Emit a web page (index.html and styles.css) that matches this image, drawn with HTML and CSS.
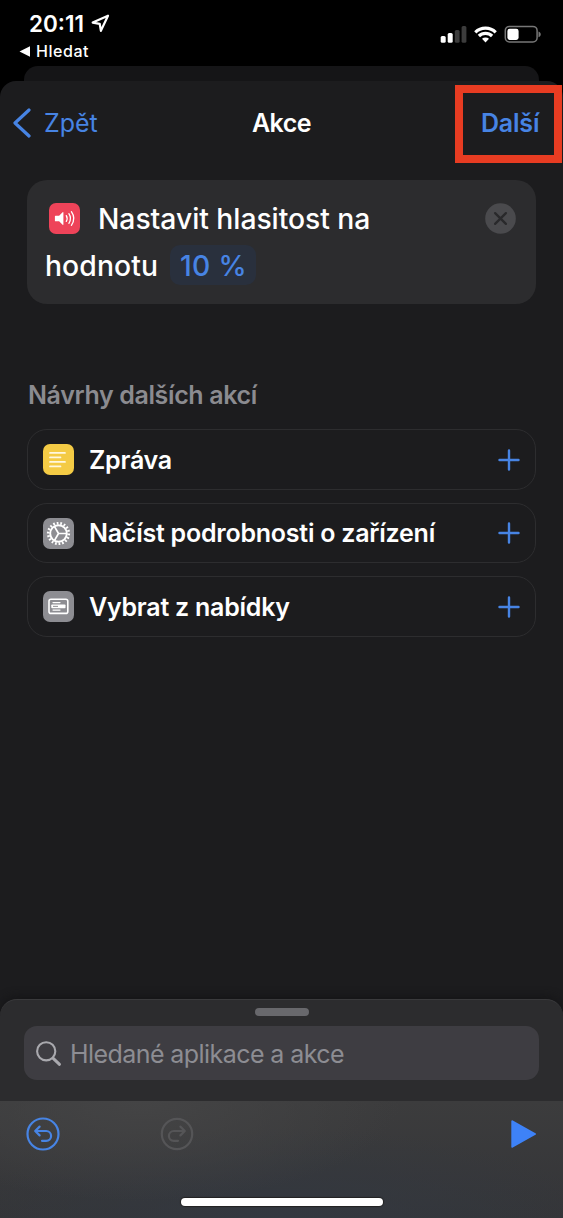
FILE: index.html
```html
<!DOCTYPE html>
<html lang="cs">
<head>
<meta charset="utf-8">
<title>Akce</title>
<link rel="stylesheet" href="styles.css">
</head>
<body>
<div class="phone">
  <header class="status">
    <div class="status-left">
      <div class="time"><span class="clock">20:11</span>
        <svg class="loc" width="19" height="19" viewBox="0 0 19 19"><path d="M17 1.700 1.700 8.600 8.700 9.800 9.900 16.800Z"/></svg>
      </div>
      <div class="return"><svg width="12" height="11" viewBox="0 0 12 11"><path d="M11 0.300V10.700L0.500 5.500Z" fill="#fff"/></svg><span class="return-text">Hledat</span></div>
    </div>
    <svg class="indicators" width="102" height="20" viewBox="0 0 102 20">
      <g fill="#fff"><rect x="0.700" y="12" width="5" height="6.800" rx="1.500"/><rect x="7.700" y="9" width="5" height="9.800" rx="1.500"/></g>
      <g fill="#3c3c3c"><rect x="14.800" y="6" width="4.800" height="12.800" rx="1.500"/><rect x="21.600" y="2" width="4.800" height="16.800" rx="1.500"/></g>
      <g fill="none" stroke="#fff" stroke-width="3.200"><path d="M35.300 8.300a14.600 14.600 0 0 1 20.400 0"/><path d="M38.900 12a9.400 9.400 0 0 1 13.200 0"/></g>
      <path d="M42 14.800a5.100 5.100 0 0 1 7 0L45.500 18.500Z" fill="#fff"/>
      <rect x="65.300" y="2.400" width="31.800" height="15.600" rx="4.200" fill="none" stroke="#777" stroke-width="1.500"/>
      <rect x="67.400" y="4.700" width="11.200" height="11.200" rx="2.300" fill="#fff"/>
      <path d="M98.500 7.500c3 1 3 4.800 0 5.800z" fill="#777"/>
    </svg>
  </header>
  <div class="back-sheet"></div>
  <section class="sheet">
    <nav class="nav">
      <div class="back"><svg width="20" height="30" viewBox="0 0 20 30"><path d="M17 2 3 15 17 28" fill="none" stroke="#4784e4" stroke-width="3.200" stroke-linecap="round" stroke-linejoin="round"/></svg><span class="back-text">Zpět</span></div>
      <span class="title">Akce</span>
      <div class="next"><span class="next-text">Další</span></div>
    </nav>
    <article class="action">
      <div class="action-line">
        <svg class="tile" width="31" height="31" viewBox="0 0 31 31"><rect width="31" height="31" rx="7" fill="#ee4359"/><path d="M6.500 12.700h3.600l3.500-3.400q.8-.6.8.4v11.600q0 1-.8.400l-3.500-3.400H6.500q-.6 0-.6-.6v-4.400q0-.6.600-.600z" fill="#fff"/><g fill="none" stroke="#fff" stroke-width="1.300" stroke-linecap="round"><path d="M17.300 12.600q1.700 2.900 0 5.800"/><path d="M19.900 10.700q3.200 4.800 0 9.600"/><path d="M22.400 8.700q4.800 6.800 0 13.600"/></g></svg>
        <span class="action-text">Nastavit hlasitost na</span>
        <svg class="close" width="31" height="31" viewBox="0 0 31 31"><circle cx="15.500" cy="15.500" r="15.300" fill="#4a4a4d"/><path d="M10.100 10.100 20.900 20.900M20.900 10.100 10.100 20.900" stroke="#29292b" stroke-width="2.300" stroke-linecap="round"/></svg>
      </div>
      <div class="action-line second"><span class="action-word">hodnotu</span><span class="value"><span class="value-text">10 %</span></span></div>
    </article>
    <h2 class="heading"><span class="heading-text">Návrhy dalších akcí</span></h2>
    <ul class="list">
      <li class="row">
        <svg class="tile" width="31" height="31" viewBox="0 0 31 31"><rect width="31" height="31" rx="7" fill="#f4cb45"/><path d="M7 8.900h15M7 13.400h10.500M7 17.900h15M7 22.400h10.500" stroke="#fff8df" stroke-width="1.700" stroke-linecap="round"/></svg>
        <span class="label l1">Zpráva</span>
        <svg class="plus" width="22" height="22" viewBox="0 0 22 22"><path d="M11 1.500v19M1.500 11h19"/></svg>
      </li>
      <li class="row">
        <svg class="tile" width="31" height="31" viewBox="0 0 31 31"><rect width="31" height="31" rx="7" fill="#8d8d92"/><g fill="none" stroke="#fff"><circle cx="15.500" cy="15.500" r="8.300" stroke-width="1.900"/><circle cx="15.500" cy="15.500" r="10.300" stroke-width="2.600" pathLength="54" stroke-dasharray="1.450 1.550"/><path d="M15.500 15.500h8M15.500 15.500 11.400 8.400M15.500 15.500 11.400 22.600" stroke-width="1.700"/></g></svg>
        <span class="label l2">Načíst podrobnosti o zařízení</span>
        <svg class="plus" width="22" height="22" viewBox="0 0 22 22"><path d="M11 1.500v19M1.500 11h19"/></svg>
      </li>
      <li class="row">
        <svg class="tile" width="31" height="31" viewBox="0 0 31 31"><rect width="31" height="31" rx="7" fill="#8d8d92"/><rect x="6" y="8.200" width="18.800" height="14.200" rx="2" fill="none" stroke="#fff" stroke-width="1.600"/><path d="M10 11.600h7M10 19.100h7" stroke="#fff" stroke-width="1.200" stroke-linecap="round"/><rect x="8.300" y="13.500" width="14.200" height="3.700" rx=".8" fill="#fff"/><path d="M10 15.350h5" stroke="#8d8d92" stroke-width="1"/></svg>
        <span class="label l3">Vybrat z nabídky</span>
        <svg class="plus" width="22" height="22" viewBox="0 0 22 22"><path d="M11 1.500v19M1.500 11h19"/></svg>
      </li>
    </ul>
  </section>
  <section class="drawer">
    <div class="handle"></div>
    <div class="search">
      <svg width="27" height="27" viewBox="0 0 27 27"><circle cx="10.200" cy="10.300" r="9.100" fill="none" stroke="#a9a9ae" stroke-width="2.100"/><path d="M17.200 17.300 23.500 23.300" stroke="#a9a9ae" stroke-width="3" stroke-linecap="round"/></svg>
      <span class="search-text">Hledané aplikace a akce</span>
    </div>
  </section>
  <footer class="toolbar">
    <div class="tools">
      <svg class="tool blue" width="34" height="34" viewBox="0 0 34 34"><circle cx="17" cy="17" r="15.500"/><path d="M13.600 9.600 9.200 14 13.600 18.400M9.600 14H20.200a4.900 4.900 0 0 1 0 9.800H16"/></svg>
      <svg class="tool grey" width="34" height="34" viewBox="0 0 34 34"><circle cx="17" cy="17" r="15.200"/><path d="M20.400 9.600 24.800 14 20.400 18.400M24.400 14H13.800a4.900 4.900 0 0 0 0 9.800H18"/></svg>
      <svg class="play" width="27" height="30" viewBox="0 0 27 30"><path d="M2.300 2.300 25 15 2.300 27.700Z" fill="#3e82f7" stroke="#3e82f7" stroke-width="2" stroke-linejoin="round"/></svg>
    </div>
    <div class="home"></div>
  </footer>
</div>
</body>
</html>
```
FILE: styles.css
```css
* { box-sizing: border-box; }
body { margin: 0; background: #000; }
.phone { width: 563px; height: 1218px; display: flex; flex-direction: column; overflow: hidden; background: #000; color: #fff; font-family: Inter, "Liberation Sans", sans-serif; white-space: nowrap; }
.status { height: 66px; display: flex; justify-content: space-between; padding: 10px 21px 0 19px; }
.time { display: flex; align-items: center; height: 27px; padding-left: 10px; gap: 7px; }
.clock { font-size: 22.500px; font-weight: 600; }
.loc path { fill: none; stroke: #fff; stroke-width: 2.200; stroke-linejoin: round; }
.return { display: flex; align-items: center; gap: 5px; height: 28px; }
.return-text { font-size: 16px; font-weight: 500; letter-spacing: .55px; }
.indicators { margin-top: 14px; }
.back-sheet { flex: none; height: 15px; margin: 0 24px; border-radius: 14px 14px 0 0; background: #151517; }
.sheet { flex: none; height: 936px; background: #1c1c1e; border-radius: 16px 16px 0 0; }
.nav { height: 99px; padding: 4px 1px 0 12px; display: grid; grid-template-columns: 1fr auto 1fr; align-items: start; line-height: 77px; font-size: 25px; }
.back { display: flex; align-items: center; gap: 12px; height: 77px; color: #4784e4; }
.back svg { margin-top: -1px; }
.title { font-weight: 600; letter-spacing: -.5px; margin-right: 11px; }
.next { justify-self: end; width: 107px; height: 78px; border: 8px solid #e83c22; color: #4784e4; font-weight: 600; line-height: 61px; padding-left: 18px; letter-spacing: -.2px; }
.action { margin: 0 27px; height: 124px; border-radius: 20px; background: #2c2c2e; padding: 15px 20px 0 18px; font-size: 28.300px; font-weight: 500; }
.action-line { display: flex; align-items: center; height: 46px; }
.second { height: 48px; }
.action .tile { margin-left: 4px; }
.action-text { margin-left: 18px; padding-top: 2px; letter-spacing: -.04px; }
.action-word { padding-top: 1px; letter-spacing: .1px; }
.close { margin-left: auto; }
.value { margin-left: 12px; height: 40px; width: 86px; line-height: 42px; border-radius: 10px; background: #29303d; color: #4784e4; padding-left: 10px; letter-spacing: .3px; }
.heading { margin: 0; padding: 75px 28px 0; height: 125px; line-height: 32px; font-size: 25px; font-weight: 600; letter-spacing: -.37px; color: #8b8b90; }
.list { list-style: none; margin: 0 27px; padding: 0; display: grid; gap: 13px; }
.row { height: 60.500px; border: 1.500px solid #2d2d2f; border-radius: 20px; display: flex; align-items: center; padding: 1px 15px 0 14px; font-size: 25px; font-weight: 600; letter-spacing: -.24px; }
.row .tile { margin-left: .5px; }
.label { margin-left: 15.500px; }
.plus { margin-left: auto; fill: none; stroke: #4784e4; stroke-width: 2.400; stroke-linecap: round; }
.tile, .plus, .close { flex: none; }
.drawer { flex: none; height: 102px; background: #2c2c2e; border-radius: 17px 17px 0 0; border-top: 1px solid #3a3a3c; margin-top: -18px; box-shadow: 0 -2px 10px #141416; padding: 8px 24px 0; }
.handle { width: 54px; height: 8px; border-radius: 4px; background: #68686c; margin: 0 auto; }
.search { margin-top: 10px; height: 54px; border-radius: 13px; background: #3e3d42; display: flex; align-items: center; padding: 2px 0 0 12px; gap: 7px; font-size: 25px; letter-spacing: -.57px; color: #8d8d93; }
.toolbar { position: relative; height: 117px; background: radial-gradient(ellipse 260px 100px at 25% 0, #444445, #44444500), radial-gradient(ellipse 320px 90px at 50% 100%, #333840, #33384000), linear-gradient(#3c3c3d, #343538); }
.tools { display: flex; align-items: center; height: 66px; padding: 0 26px; }
.tool { fill: none; stroke-width: 2.200; stroke-linecap: round; stroke-linejoin: round; }
.blue { stroke: #4784e4; }
.grey { stroke: #555557; margin-left: 100px; }
.play { margin-left: auto; }
.home { width: 202px; height: 8px; border-radius: 4px; background: #fff; margin: 31px auto 0; box-shadow: 0 0 1px 1px #222; }
```
